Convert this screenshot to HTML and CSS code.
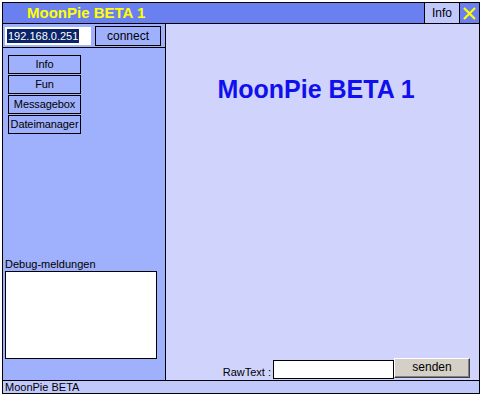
FILE: index.html
```html
<!DOCTYPE html>
<html lang="de">
<head>
    <meta charset="UTF-8">
    <meta name="viewport" content="width=device-width, initial-scale=1.0">
    <title>MoonPie BETA 1</title>
    <link rel="stylesheet" href="styles.css">
</head>
<body>
    <div class="window">
        <div class="title-bar">
            <span class="title">MoonPie BETA 1</span>
            <div class="info-btn">Info</div>
            <div class="close-btn">
                <svg width="13" height="13" viewBox="0 0 13 13">
                    <path d="M1 1 L12 12 M12 1 L1 12" stroke="#ffff00" stroke-width="2.2" fill="none"/>
                </svg>
            </div>
        </div>

        <div class="content">
            <div class="side-panel">
                <div class="connect-row">
                    <div class="ip-field"><span class="selected">192.168.0.251</span></div>
                    <div class="btn connect-btn">connect</div>
                </div>

                <div class="menu">
                    <div class="btn menu-btn">Info</div>
                    <div class="btn menu-btn">Fun</div>
                    <div class="btn menu-btn">Messagebox</div>
                    <div class="btn menu-btn">Dateimanager</div>
                </div>

                <div class="debug">
                    <div class="debug-label">Debug-meldungen</div>
                    <div class="debug-box"></div>
                </div>
            </div>

            <div class="main-area">
                <h1 class="headline">MoonPie BETA 1</h1>
                <div class="raw-row">
                    <span class="raw-label">RawText :</span>
                    <div class="raw-input"></div>
                    <div class="send-btn">senden</div>
                </div>
            </div>
        </div>

        <div class="status-bar">MoonPie BETA</div>
    </div>
</body>
</html>
```

FILE: styles.css
```css
* {
    margin: 0;
    padding: 0;
    box-sizing: border-box;
}

body {
    font-family: 'Liberation Sans', Arial, sans-serif;
    font-size: 11px;
    background: #ffffff;
    color: #000000;
}

.window {
    margin: 2px 0 0 2px;
    width: 478px;
    height: 392px;
    border: 1px solid #000000;
    display: flex;
    flex-direction: column;
}

.title-bar {
    height: 21px;
    background: #6b80f0;
    border-bottom: 1px solid #000000;
    display: flex;
}

.title {
    padding-left: 24px;
    line-height: 20px;
    font-size: 15px;
    font-weight: bold;
    color: #ffff00;
}

.info-btn {
    margin-left: auto;
    width: 35px;
    border-left: 1px solid #000000;
    background: #c0c8fc;
    text-align: center;
    line-height: 20px;
    font-size: 12px;
}

.close-btn {
    width: 20px;
    border-left: 1px solid #000000;
    display: flex;
    align-items: center;
    justify-content: center;
}

.content {
    height: 357px;
    border-bottom: 1px solid #000000;
    display: flex;
}

.side-panel {
    width: 163px;
    background: #9fb0fc;
    border-right: 1px solid #000000;
    display: flex;
    flex-direction: column;
}

.connect-row {
    height: 24px;
    border-bottom: 1px solid #000000;
    display: flex;
    align-items: flex-start;
    padding-left: 2px;
}

.ip-field {
    margin-top: 3px;
    width: 86px;
    height: 18px;
    background: #ffffff;
    padding: 2px 0 0 2px;
}

.selected {
    display: inline-block;
    background: #0a246a;
    color: #ffffff;
    font-size: 11px;
    line-height: 14px;
    padding: 0 1px;
}

.btn {
    border: 1px solid #000000;
    text-align: center;
    font-size: 11px;
}

.connect-btn {
    margin: 2px 0 0 4px;
    width: 66px;
    height: 20px;
    line-height: 18px;
    font-size: 12px;
}

.menu {
    padding: 7px 0 0 5px;
    display: flex;
    flex-direction: column;
    gap: 1px;
}

.menu-btn {
    width: 73px;
    height: 19px;
    line-height: 17px;
    white-space: nowrap;
    letter-spacing: -0.1px;
}

.debug {
    margin-top: auto;
    padding: 0 0 21px 2px;
}

.debug-label {
    line-height: 13px;
    font-size: 11px;
}

.debug-box {
    width: 152px;
    height: 88px;
    background: #ffffff;
    border: 1px solid #000000;
}

.main-area {
    flex: 1;
    background: #d0d4fc;
    display: flex;
    flex-direction: column;
}

.headline {
    padding: 50px 13px 0 0;
    text-align: center;
    font-size: 25px;
    line-height: 30px;
    font-weight: bold;
    color: #1010ee;
}

.raw-row {
    margin-top: auto;
    padding: 0 9px 1px 0;
    display: flex;
    justify-content: flex-end;
    align-items: flex-end;
}

.raw-label {
    line-height: 13px;
    margin-right: 2px;
}

.raw-input {
    width: 121px;
    height: 19px;
    background: #ffffff;
    border: 1px solid #000000;
}

.send-btn {
    width: 76px;
    height: 20px;
    margin-bottom: 1px;
    background: #d4d0c8;
    border-top: 1px solid #ffffff;
    border-left: 1px solid #ffffff;
    border-right: 1px solid #404040;
    border-bottom: 1px solid #404040;
    box-shadow: inset -1px -1px #808080;
    text-align: center;
    line-height: 17px;
    font-size: 12px;
}

.status-bar {
    flex: 1;
    background: #c0c8fc;
    padding-left: 2px;
    line-height: 12px;
    font-size: 11px;
}
```
